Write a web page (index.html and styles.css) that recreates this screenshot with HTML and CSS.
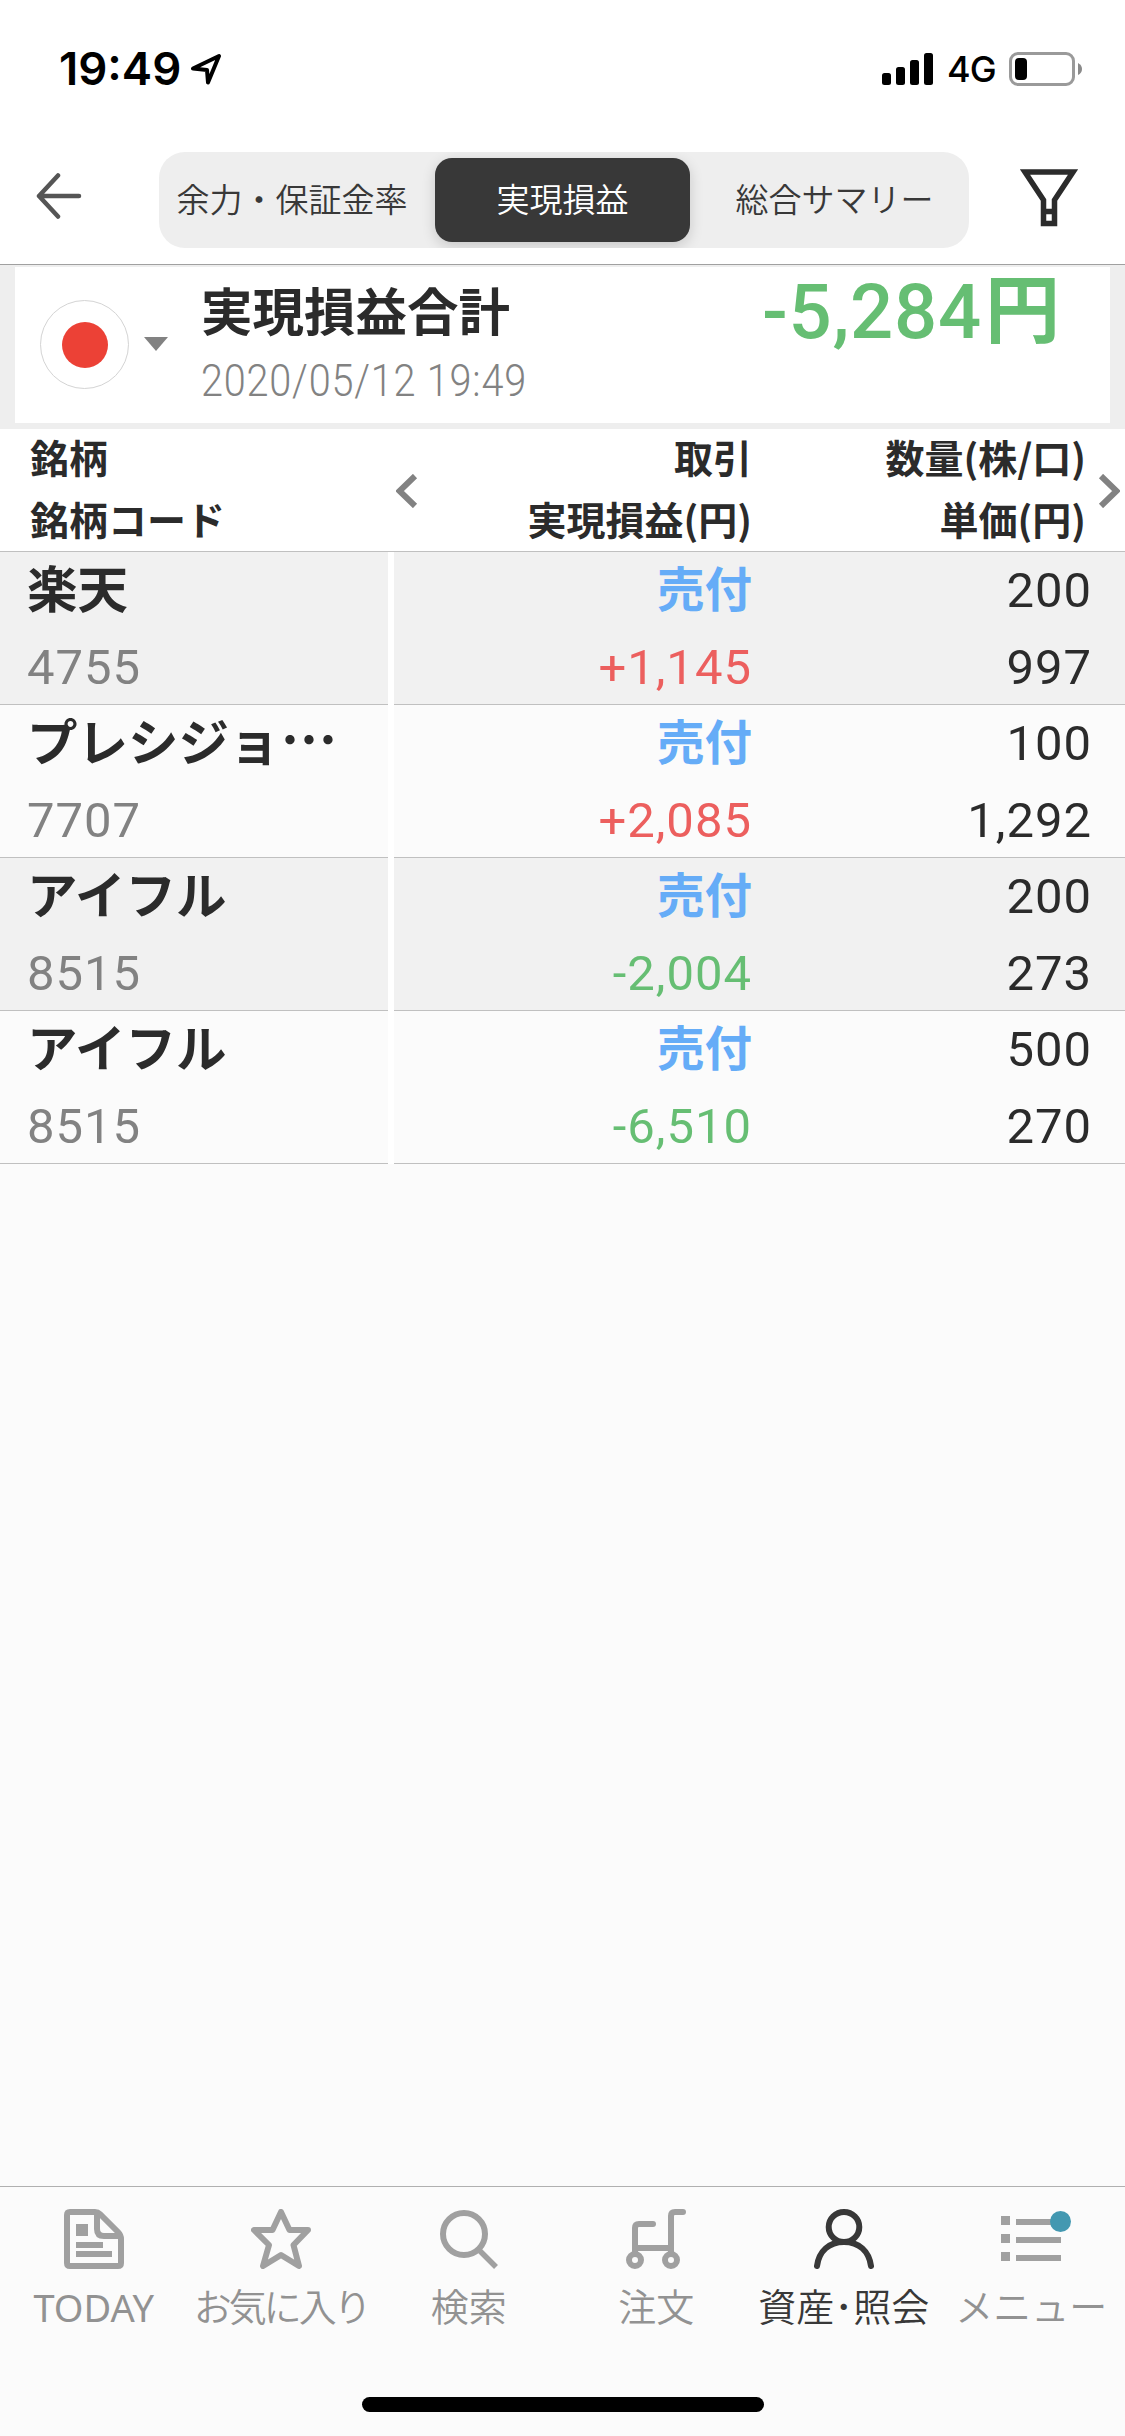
FILE: index.html
```html
<!DOCTYPE html>
<html lang="ja">
<head>
<meta charset="utf-8">
<title>実現損益</title>
<link rel="stylesheet" href="styles.css">
</head>
<body>
<div class="screen">
  <header class="status">
    <div class="status-left">
      <span class="clock">19:49</span>
      <svg class="location" width="30" height="32" viewBox="0 0 30 32"><path d="M2 15.500L28 3L17 29.500L16 17Z" fill="none" stroke="#000" stroke-width="4" stroke-linejoin="round"/></svg>
    </div>
    <div class="status-right">
      <svg width="51" height="34" viewBox="0 0 51 34"><rect x="0" y="21" width="9" height="12" rx="2.500"/><rect x="14" y="15" width="9" height="18" rx="2.500"/><rect x="28" y="8" width="9" height="25" rx="2.500"/><rect x="42" y="1" width="9" height="32" rx="2.500"/></svg>
      <span class="network">4G</span>
      <svg width="74" height="34" viewBox="0 0 74 34"><rect x="1.500" y="1.500" width="63" height="31" rx="7.500" fill="none" stroke="#9a9a9a" stroke-width="3"/><rect x="6" y="6" width="12" height="22" rx="4"/><path d="M69 11Q73 13 73 17T69 23Z" fill="#8a8a8a"/></svg>
    </div>
  </header>

  <nav class="topbar">
    <svg class="back" width="46" height="50" viewBox="0 0 46 50"><path d="M22 4.500L3 25L22 45.500M3 25H43" fill="none" stroke="#555" stroke-width="4.500" stroke-linecap="round" stroke-linejoin="round"/></svg>
    <div class="segments">
      <span class="segment">余力・保証金率</span>
      <span class="segment active">実現損益</span>
      <span class="segment">総合サマリー</span>
    </div>
    <svg class="filter" width="58" height="58" viewBox="0 0 58 58"><path d="M5 3H53L34.500 31V54.500H23.500V31ZM23 42.500H35" fill="none" stroke="#2b2b2b" stroke-width="5.500"/></svg>
  </nav>

  <section class="summary">
    <div class="card">
      <div class="flag"><i></i></div>
      <svg class="caret" width="24" height="14" viewBox="0 0 24 14"><path d="M0 0H24L12 14Z" fill="#828282"/></svg>
      <div class="card-text">
        <div class="card-title">実現損益合計</div>
        <div class="card-date">2020/05/12 19:49</div>
      </div>
      <div class="total"><span class="total-num">-5,284</span><span class="total-unit">円</span></div>
    </div>
  </section>

  <section class="table-head">
    <div class="head-name">銘柄<br>銘柄コード</div>
    <svg class="prev" width="22" height="34" viewBox="0 0 22 34"><path d="M19 2L3.500 17L19 32" fill="none" stroke="#828282" stroke-width="6"/></svg>
    <div class="head-trade">取引<br>実現損益(円)</div>
    <div class="head-qty">数量(株/口)<br>単価(円)</div>
    <svg class="next" width="22" height="34" viewBox="0 0 22 34"><path d="M3 2L18.500 17L3 32" fill="none" stroke="#828282" stroke-width="6"/></svg>
  </section>

  <main class="rows">
    <div class="row">
      <div class="name-cell"><span class="name">楽天</span><span class="code">4755</span></div>
      <div class="data-cell"><div class="trade"><span class="sell">売付</span><span class="num plus">+1,145</span></div><div class="qty"><span class="num">200</span><span class="num">997</span></div></div>
    </div>
    <div class="row">
      <div class="name-cell"><span class="name">プレシジョ<span class="dots">…</span></span><span class="code">7707</span></div>
      <div class="data-cell"><div class="trade"><span class="sell">売付</span><span class="num plus">+2,085</span></div><div class="qty"><span class="num">100</span><span class="num">1,292</span></div></div>
    </div>
    <div class="row">
      <div class="name-cell"><span class="name">アイフル</span><span class="code">8515</span></div>
      <div class="data-cell"><div class="trade"><span class="sell">売付</span><span class="num minus">-2,004</span></div><div class="qty"><span class="num">200</span><span class="num">273</span></div></div>
    </div>
    <div class="row">
      <div class="name-cell"><span class="name">アイフル</span><span class="code">8515</span></div>
      <div class="data-cell"><div class="trade"><span class="sell">売付</span><span class="num minus">-6,510</span></div><div class="qty"><span class="num">500</span><span class="num">270</span></div></div>
    </div>
  </main>

  <footer class="tabbar">
    <div class="tabs">
      <div class="tab">
        <svg width="60" height="60" viewBox="0 0 60 60"><g fill="none" stroke="#a0a0a0" stroke-width="6" stroke-linejoin="round"><path d="M6 3H31Q34 3 36 5L54 23Q57 26 57 30V54Q57 57 54 57H6Q3 57 3 54V6Q3 3 6 3Z"/><path d="M33 4V20Q33 27 40 27H56"/></g><g fill="#a0a0a0"><path d="M12 15h12v12H12zM12 33h27v6H12zM12 42h36v6H12z"/></g></svg>
        <span class="tab-label latin">TODAY</span>
      </div>
      <div class="tab">
        <svg width="60" height="60" viewBox="0 0 60 60"><path d="M30 3L38.500 21H57L42.500 36L48 57L30 46L12 57L18 36L3 21H21.500Z" fill="none" stroke="#a0a0a0" stroke-width="6" stroke-linejoin="round"/></svg>
        <span class="tab-label kana">お気に入り</span>
      </div>
      <div class="tab">
        <svg width="60" height="60" viewBox="0 0 60 60"><circle cx="25" cy="25" r="21" fill="none" stroke="#a0a0a0" stroke-width="6"/><path d="M39 40L57 58" stroke="#a0a0a0" stroke-width="5.500"/></svg>
        <span class="tab-label">検索</span>
      </div>
      <div class="tab">
        <svg width="60" height="60" viewBox="0 0 60 60"><g fill="none" stroke="#a0a0a0" stroke-width="6" stroke-linecap="round"><path d="M9 44V19Q9 15 13 15H27M45 44V7Q45 3 49 3H57M10 39H44"/><circle cx="9" cy="51" r="6"/><circle cx="45" cy="51" r="6"/></g></svg>
        <span class="tab-label">注文</span>
      </div>
      <div class="tab current">
        <svg width="60" height="60" viewBox="0 0 60 60"><g fill="none" stroke="#383838" stroke-width="6" stroke-linecap="round"><ellipse cx="30" cy="18" rx="15.300" ry="15"/><path d="M3 57C5 42 15 33 30 33S55 42 57 57"/></g></svg>
        <span class="tab-label account">資産･照会</span>
      </div>
      <div class="tab">
        <svg width="60" height="60" viewBox="0 0 60 60"><path d="M0 7h9v9H0zM15 10h45v6H15zM0 25h9v9H0zM15 28h45v6H15zM0 43h9v9H0zM15 46h45v6H15z" fill="#a0a0a0"/></svg>
        <i class="badge"></i>
        <span class="tab-label">メニュー</span>
      </div>
    </div>
    <div class="home-indicator"></div>
  </footer>
</div>
</body>
</html>
```

FILE: styles.css
```css
* { box-sizing: border-box; }
body { margin: 0; }
svg { display: block; flex: none; }

.screen {
  width: 1125px;
  height: 2436px;
  display: flex;
  flex-direction: column;
  background: #fbfbfb;
  color: #2b2b2b;
  font-family: "Noto Sans CJK JP", sans-serif;
}

/* Status bar */
.status {
  height: 132px;
  padding: 6px 42px 0 59px;
  display: flex;
  align-items: center;
  justify-content: space-between;
  background: #fff;
  color: #000;
  font-family: Inter, sans-serif;
}
.status-left, .status-right { display: flex; align-items: center; }
.clock { width: 132px; font-size: 45.500px; font-weight: 600; line-height: 54px; white-space: nowrap; }
.network { width: 76px; padding-left: 14px; font-size: 36px; font-weight: 450; line-height: 40px; letter-spacing: -1px; }

/* Segmented navigation */
.topbar {
  height: 133px;
  padding: 20px 47px 16px 36px;
  display: flex;
  align-items: flex-start;
  background: #fff;
  border-bottom: 1px solid #a0a0a0;
}
.back { margin: 19px 77px 0 0; }
.filter { margin: 17px 0 0 51px; }
.segments {
  width: 810px;
  height: 96px;
  padding: 6px;
  display: grid;
  grid-template-columns: 270px 255px 1fr;
  border-radius: 26px;
  background: #eee;
  overflow: hidden;
  font-size: 33px;
  font-weight: 350;
  line-height: 80px;
  color: #383838;
  text-align: center;
  white-space: nowrap;
}
.segment:first-child { padding-right: 16px; }
.segment:last-child { padding-left: 16px; }
.segment.active {
  height: 84px;
  border-radius: 17px;
  background: #383838;
  color: #fff;
  box-shadow: 0 4px 14px rgba(0, 0, 0, .16);
}

/* Total card */
.summary { height: 164px; padding: 2px 15px 6px; background: #eee; }
.card { height: 156px; display: flex; padding-left: 25px; background: #fff; }
.flag {
  width: 89px;
  height: 89px;
  margin-top: 33px;
  display: grid;
  place-items: center;
  border: 1px solid #d4d4d4;
  border-radius: 50%;
}
.flag i { width: 46px; height: 46px; border-radius: 50%; background: #ec4136; }
.caret { margin: 70px 33px 0 15px; }
.card-text { width: 561px; }
.card-title { margin-top: 7px; font-size: 51.500px; font-weight: 700; line-height: 70px; white-space: nowrap; }
.card-date {
  margin-top: 12px;
  width: 400px;
  color: #828282;
  font: 300 44px/50px Roboto, sans-serif;
  letter-spacing: .9px;
  white-space: nowrap;
  transform: scaleX(.9);
  transform-origin: 0 0;
}
.total { display: flex; height: 86px; color: #66be73; white-space: nowrap; }
.total-num { width: 223px; font: 500 76px/90px Roboto, sans-serif; letter-spacing: .7px; }
.total-unit { font-size: 75px; font-weight: 700; line-height: 76px; }

/* Column headings */
.table-head {
  height: 123px;
  display: flex;
  padding: 0 5px 0 30px;
  background: #fff;
  border-bottom: 1px solid #c0c0c0;
  font-size: 39px;
  font-weight: 700;
  line-height: 62px;
  white-space: nowrap;
}
.head-name, .head-trade, .head-qty { margin-top: -4px; height: 124px; }
.head-name { width: 366px; }
.head-trade { width: 334px; text-align: right; }
.head-qty { width: 334px; text-align: right; }
.prev { margin-top: 45px; }
.next { margin: 45px 0 0 12px; }

/* Holdings */
.rows { flex: 1; }
.row {
  height: 153px;
  display: grid;
  grid-template-columns: 388px 1fr;
  grid-template-rows: 153px;
  column-gap: 6px;
  background: #fff;
}
.name-cell, .data-cell { height: 153px; background: #fbfbfb; border-bottom: 1px solid #c0c0c0; }
.row:nth-child(odd) .name-cell, .row:nth-child(odd) .data-cell { background: #f1f1f1; }
.name-cell { padding-left: 27px; display: flex; flex-direction: column; }
.name { height: 70px; font-size: 50.500px; font-weight: 700; line-height: 68px; white-space: nowrap; }
.dots { margin-left: 1px; font-size: 57px; line-height: 0; }
.code, .num { font: 400 49px/70px Roboto, sans-serif; letter-spacing: 1px; }
.code { color: #828282; margin-top: 11px; }
.data-cell { display: flex; padding-right: 33px; }
.trade, .qty { display: flex; flex-direction: column; align-items: flex-end; }
.trade { width: 358px; }
.qty { flex: 1; }
.sell { color: #65acf7; font-size: 47.500px; font-weight: 700; line-height: 70px; }
.trade .num { margin-top: 11px; }
.qty .num:first-child { margin: 4px 0 7px; }
.plus { color: #ec5f5e; }
.minus { color: #66be73; }

/* Bottom tabs */
.tabbar { height: 250px; border-top: 1px solid #b0b0b0; }
.tabs { height: 210px; display: grid; grid-template-columns: repeat(6, 1fr); }
.tab {
  position: relative;
  padding-top: 22px;
  display: flex;
  flex-direction: column;
  align-items: center;
  color: #929292;
}
.tab-label { margin-top: 8px; font-size: 38px; font-weight: 350; line-height: 56px; white-space: nowrap; }
.latin { margin-top: 10px; font-family: "Noto Sans", sans-serif; font-weight: 400; }
.kana { letter-spacing: -3px; }
.current { color: #383838; }
.badge { position: absolute; left: 112px; top: 24px; width: 21px; height: 21px; border-radius: 50%; background: #4398b1; }
.home-indicator { width: 402px; height: 15px; margin: 0 auto; border-radius: 8px; background: #000; }
```
